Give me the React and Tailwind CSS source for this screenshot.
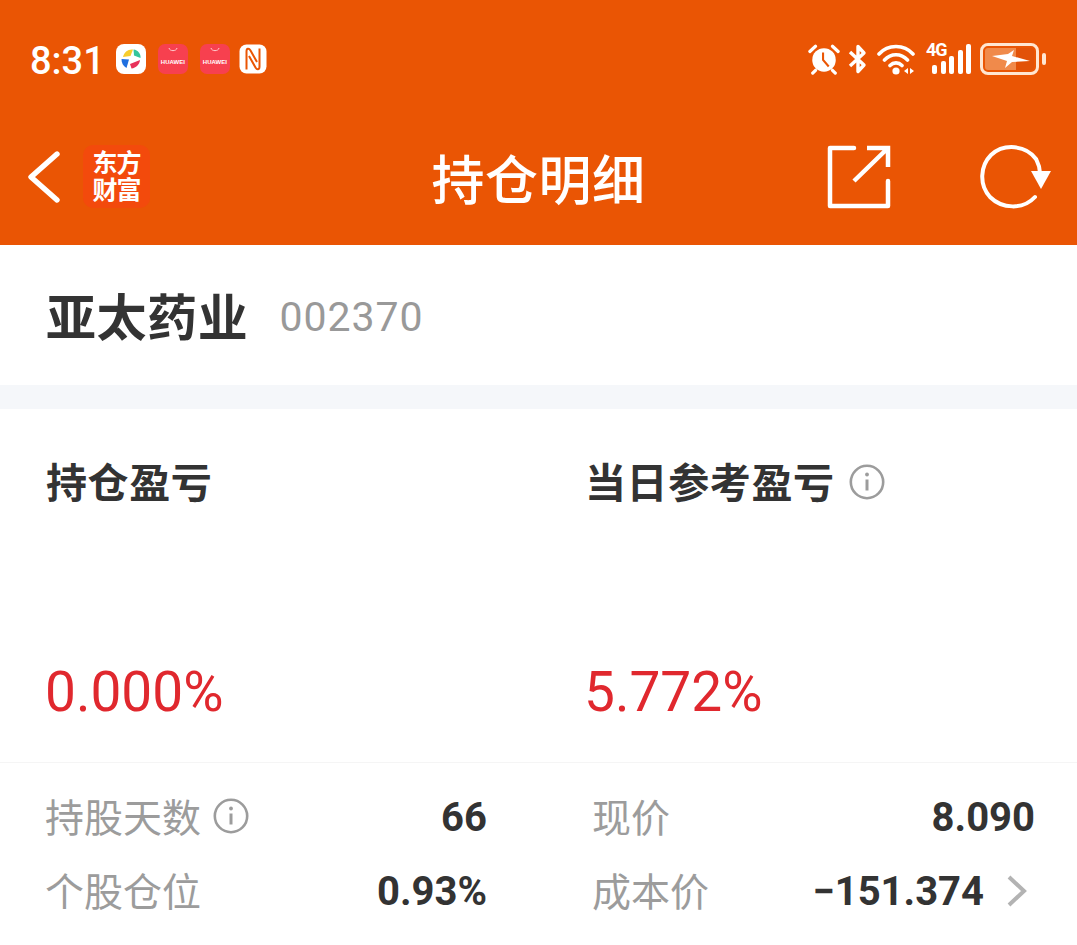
const CJK = '"Noto Sans CJK SC", "Noto Sans", sans-serif';
const NUM = 'Roboto, "Noto Sans CJK SC", sans-serif';

function Info({ size = 36, color = "#9c9c9c" }) {
  return (
    <svg width={size} height={size} viewBox="0 0 36 36" fill="none" className="shrink-0">
      <circle cx="18" cy="18" r="16.2" stroke={color} strokeWidth="2.6" />
      <circle cx="18" cy="10.5" r="1.9" fill={color} />
      <path d="M18 15.5V26.5" stroke={color} strokeWidth="3" />
    </svg>
  );
}

function HuaweiIcon() {
  return (
    <div className="w-[30px] h-[30px] rounded-[7px] bg-[#f7404f] flex flex-col items-center shrink-0">
      <svg width="12" height="7" viewBox="0 0 12 7" fill="none" className="mt-[3px]">
        <path d="M2 1C2.500 4.500 9.500 4.500 10 1" stroke="#ffd9d9" strokeWidth="0.9" />
      </svg>
      <span className="text-[6px] leading-[7px] mt-[5px] text-white font-bold" style={{ fontFamily: '"Liberation Sans", sans-serif' }}>
        HUAWEI
      </span>
    </div>
  );
}

function ColorIcon() {
  return (
    <svg width="30" height="30" viewBox="0 0 30 30" className="shrink-0">
      <rect width="30" height="30" rx="8" fill="#fff" />
      <path d="M7 13C8 8 12 5 17 5.500L14.500 12Z" fill="#f8cd2c" />
      <path d="M17.500 5.500C22 6 25 10 24.500 14L18 11.500Z" fill="#35c59b" />
      <path d="M5.500 15L13 15.500L10.500 24C7 22 5.500 19 5.500 15Z" fill="#1f6fe0" />
      <path d="M14 20L24 16C23.500 20.500 20 24 15.500 24.500Z" fill="#e8315a" />
    </svg>
  );
}

function NfcIcon() {
  return (
    <svg width="28" height="30" viewBox="0 0 28 30" className="shrink-0">
      <rect x="0.500" y="0.500" width="27" height="29" rx="7" fill="#fff" />
      <path d="M7.500 25.500V7.500C7.500 4 10 4 11.500 6.500L18 18" fill="none" stroke="#ea5504" strokeWidth="2" />
      <path d="M20.500 4.500V22.500C20.500 26 18 26 16.500 23.500L10 12" fill="none" stroke="#ea5504" strokeWidth="2" />
    </svg>
  );
}

function StatusRight() {
  return (
    <div className="flex items-center text-white">
      <svg width="32" height="32" viewBox="0 0 34 32" fill="none">
        <path d="M2 8L8 2.500M32 8L26 2.500M8 28L5 31M26 28L29 31" stroke="#fff" strokeWidth="3.400" strokeLinecap="round" />
        <circle cx="17" cy="17" r="12.500" fill="#fff" />
        <path d="M16 9V17L22 24" stroke="#ea5504" strokeWidth="2.200" />
      </svg>
      <svg width="20" height="32" viewBox="0 0 20 32" fill="none" className="ml-[8px]">
        <path d="M2 9L16 22L10 28.500V3.500L16 10L2 23" stroke="#fff" strokeWidth="3.400" strokeLinejoin="round" />
      </svg>
      <svg width="40" height="32" viewBox="0 0 40 32" fill="none" className="ml-[9px]">
        <path d="M2 11C11 1 27 1 36 11M7.500 17C14 10 24 10 30.500 17M13 22.500C16.500 19 21.500 19 25 22.500" stroke="#fff" strokeWidth="3.600" strokeLinecap="round" />
        <circle cx="19" cy="28" r="3.600" fill="#fff" />
        <path d="M31 25L27 28L31 31ZM33 25L37 28L33 31Z" fill="#fff" />
      </svg>
      <div className="ml-[9px] relative w-[45px] h-[32px]">
        <span className="absolute left-0 top-[-1px] text-[18px] leading-[15px] font-bold tracking-[-1px]" style={{ fontFamily: NUM }}>4G</span>
        <div className="absolute left-[6px] bottom-[1px] flex items-end gap-[3.500px]">
          <div className="w-[5px] h-[9px] bg-white rounded-[2px]" />
          <div className="w-[5px] h-[13px] bg-white rounded-[2px]" />
          <div className="w-[5px] h-[18px] bg-white rounded-[2px]" />
          <div className="w-[5px] h-[24px] bg-white rounded-[2px]" />
          <div className="w-[5px] h-[30px] bg-white rounded-[2px]" />
        </div>
      </div>
      <div className="ml-[9px] w-[59px] h-[32px] rounded-[8px] border-[3px] border-[#ffe6d2] p-[2px] relative flex">
        <div className="w-[31px] h-full rounded-l-[3px] bg-[#f08a4b]" />
        <div className="w-[18px] h-full rounded-r-[3px] bg-[#e25208]" />
        <svg width="38" height="18" viewBox="0 0 38 18" className="absolute left-[9px] top-[4px]">
          <path d="M0 6L16 4L22 0L20 6L38 11L20 12L13 18L15 11Z" fill="#fff" />
        </svg>
      </div>
      <div className="ml-[3px] w-[4px] h-[12px] rounded-full bg-[#ffe6d2]" />
    </div>
  );
}

function LeftCell({ title, value, info }) {
  return (
    <div className="flex-1">
      <div className="flex items-center h-[48px]">
        <span className="text-[41px] leading-[48px] font-bold text-[#333333] tracking-[0.6px]">{title}</span>
        {info && <span className="ml-[14px] mt-[4px]"><Info /></span>}
      </div>
      <div className="mt-[157px] text-[55px] leading-[62px] text-[#e0282e] -ml-px" style={{ fontFamily: NUM }}>{value}</div>
    </div>
  );
}

function Row({ label, value, info, chevron }) {
  return (
    <div className="flex items-center h-[74px]">
      <span className="text-[39px] leading-[46px] text-[#9c9c9c] mb-[4px]">{label}</span>
      {info && <span className="ml-[12px] mb-[3px]"><Info /></span>}
      <span className="ml-auto text-[40px] leading-[46px] font-bold text-[#333333] mt-[2px]" style={{ fontFamily: NUM }}>{value}</span>
      {chevron && (
        <svg width="24" height="34" viewBox="0 0 24 34" fill="none" className="ml-[21px] mr-[6px]">
          <path d="M4 3L19 17L4 31" stroke="#b3b3b3" strokeWidth="4" />
        </svg>
      )}
    </div>
  );
}

export default function App() {
  return (
    <div className="w-[1077px] h-[945px] overflow-hidden bg-white" style={{ fontFamily: CJK }}>
      <header className="h-[245px] bg-[#ea5504] flex flex-col text-white">
        <div className="h-[118px] flex items-center pl-[30px] pr-[31px]">
          <span className="text-[38px] leading-[44px] mr-[11px] mt-[3px] font-medium" style={{ fontFamily: NUM }}>8:31</span>
          <div className="flex items-center gap-[12px]">
            <ColorIcon />
            <HuaweiIcon />
            <HuaweiIcon />
            <span className="-ml-[3px]"><NfcIcon /></span>
          </div>
          <div className="ml-auto"><StatusRight /></div>
        </div>
        <div className="flex-1 flex items-center pl-[27px] pr-[25px] pb-[10px] relative">
          <svg width="34" height="56" viewBox="0 0 34 56" fill="none">
            <path d="M30 5L4 28L30 51" stroke="#fff" strokeWidth="5.400" strokeLinecap="round" strokeLinejoin="round" />
          </svg>
          <div className="ml-[22px] w-[67px] h-[63px] pb-[3px] rounded-[10px] bg-[#f34a0c] flex flex-col items-center justify-center text-[25px] leading-[27px] font-bold tracking-[-1px]">
            <span>东方</span>
            <span>财富</span>
          </div>
          <span className="absolute left-0 right-0 text-center text-[53px] leading-[60px] top-[29px] font-medium tracking-[0.5px]">持仓明细</span>
          <svg width="64" height="64" viewBox="0 0 64 64" fill="none" className="ml-auto mr-[89px]">
            <path d="M27 3H3V61H61V36" stroke="#fff" strokeWidth="4.500" strokeLinecap="round" strokeLinejoin="round" />
            <path d="M27 36L61 3M40 3H61V22" stroke="#fff" strokeWidth="4.500" />
          </svg>
          <svg width="72" height="66" viewBox="0 0 72 66" fill="none">
            <path d="M55 53C43 66 22 65 10 53C-1 41 0 22 11 11C24 -1 46 1 56 15C58 19 60 22 60 29" stroke="#fff" strokeWidth="4" strokeLinecap="round" />
            <path d="M51 27H71L61 45Z" fill="#fff" />
          </svg>
        </div>
      </header>

      <section className="h-[140px] flex items-center pl-[46px] pb-[3px]">
        <span className="text-[50px] leading-[60px] font-bold text-[#333333] tracking-[0.6px]">亚太药业</span>
        <span className="ml-[31px] mt-[6px] text-[41px] leading-[48px] text-[#999999] tracking-[1px]" style={{ fontFamily: NUM }}>002370</span>
      </section>

      <div className="h-[24px] bg-[#f5f7fa]" />

      <section className="h-[354px] flex pl-[46px] pt-[47px] border-b border-[#f5f5f5]">
        <div className="w-[539px]"><LeftCell title="持仓盈亏" value="0.000%" /></div>
        <LeftCell title="当日参考盈亏" value="5.772%" info />
      </section>

      <section className="flex pl-[45px] pr-[42px] pt-[17px]">
        <div className="w-[442px]">
          <Row label="持股天数" value="66" info />
          <Row label="个股仓位" value="0.93%" />
        </div>
        <div className="ml-[105px] flex-1">
          <Row label="现价" value="8.090" />
          <Row label="成本价" value="−151.374" chevron />
        </div>
      </section>
    </div>
  );
}
